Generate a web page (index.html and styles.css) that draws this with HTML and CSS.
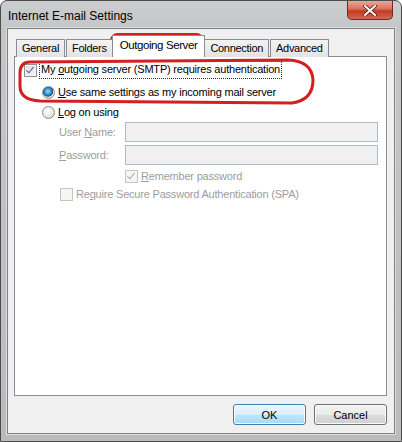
FILE: index.html
```html
<!DOCTYPE html>
<html lang="en">
  <head>
    <meta charset="UTF-8" />
    <link rel="stylesheet" href="styles.css">
    <title>Internet E-mail Settings</title>
  </head>
  <body>
    <div class="window">
      <div class="titlebar">
        <span class="title">Internet E-mail Settings</span>
        <div class="close">
          <svg width="14" height="11" viewBox="0 0 14 11">
            <path d="M2 1 L12 10 M12 1 L2 10" stroke="#5a1a12" stroke-width="3.6" stroke-linecap="round"/>
            <path d="M2 1 L12 10 M12 1 L2 10" stroke="#ffffff" stroke-width="2" stroke-linecap="round"/>
          </svg>
        </div>
      </div>

      <div class="client">
        <div class="tabs">
          <div class="tab">General</div>
          <div class="tab">Folders</div>
          <div class="tab active">Outgoing Server</div>
          <div class="tab">Connection</div>
          <div class="tab">Advanced</div>
        </div>

        <div class="panel">
          <div class="row row-auth">
            <span class="check checked"></span>
            <span class="focus">My <u>o</u>utgoing server (SMTP) requires authentication</span>
          </div>
          <div class="row row-same">
            <span class="radio on"></span>
            <span><u>U</u>se same settings as my incoming mail server</span>
          </div>
          <div class="row row-logon">
            <span class="radio"></span>
            <span><u>L</u>og on using</span>
          </div>
          <div class="row field row-user">
            <span class="label">User <u>N</u>ame:</span>
            <span class="input"></span>
          </div>
          <div class="row field row-pass">
            <span class="label"><u>P</u>assword:</span>
            <span class="input"></span>
          </div>
          <div class="row disabled row-remember">
            <span class="check checked off"></span>
            <span><u>R</u>emember password</span>
          </div>
          <div class="row disabled row-spa">
            <span class="check off"></span>
            <span>Re<u>q</u>uire Secure Password Authentication (SPA)</span>
          </div>
        </div>

        <div class="buttons">
          <button class="btn ok" type="button">OK</button>
          <button class="btn" type="button">Cancel</button>
        </div>
      </div>

      <!-- red marks drawn over the dialog -->
      <svg class="marks" width="402" height="442" viewBox="0 0 402 442">
        <rect x="111.5" y="34.5" width="91" height="21" rx="6" fill="none" stroke="#d21f1f" stroke-width="3"/>
        <path d="M30 62 L288 60 Q312 61 313 80 Q313 100 292 103 L40 101 Q20 100 20 86 L20 73 Q20 62 30 62 Z"
              fill="none" stroke="#d21f1f" stroke-width="3"/>
      </svg>
    </div>
  </body>
</html>
```

FILE: styles.css
```css
* {
  box-sizing: border-box;
}
body {
  margin: 0;
  width: 402px;
  height: 442px;
  overflow: hidden;
  font-family: "Liberation Sans", Arial, sans-serif;
  font-size: 11px;
  letter-spacing: -0.2px;
  color: #000;
}
.window {
  position: relative;
  width: 402px;
  height: 442px;
  display: flex;
  flex-direction: column;
  padding: 0 6px 7px 6px;
  border: 1px solid #4c4c4c;
  border-radius: 7px 7px 0 0;
  background: linear-gradient(to bottom, #cbcccd 0, #c4c6c8 30px, #b9bbbd 100%);
}
.titlebar {
  height: 27px;
  display: flex;
  align-items: flex-start;
  padding: 0 2px 0 1px;
}
.title {
  align-self: center;
  font-size: 12px;
  letter-spacing: 0;
  margin-top: 2px;
}
.close {
  margin-left: auto;
  width: 46px;
  height: 19px;
  display: flex;
  align-items: center;
  justify-content: center;
  border: 1px solid #6b2a22;
  border-top: none;
  border-radius: 0 0 5px 5px;
  background: linear-gradient(to bottom, #e9a99a 0, #d7705c 45%, #c23a22 55%, #d4684e 100%);
}
.client {
  flex: 1;
  display: flex;
  flex-direction: column;
  padding: 0 7px 0 6px;
  background: #f0f0f0;
  border: 1px solid #7e8084;
  box-shadow: 0 0 0 1px #dcdde0;
}

/* tabs */
.tabs {
  position: relative;
  z-index: 1;
  display: flex;
  align-items: flex-end;
  height: 23px;
  margin-top: 5px;
  margin-bottom: -1px;
  padding-left: 2px;
  letter-spacing: -0.3px;
}
.tab {
  height: 18px;
  padding: 0 5px;
  line-height: 16px;
  border: 1px solid #898c95;
  border-bottom: none;
  margin-right: 1px;
  background: linear-gradient(to bottom, #f3f3f3, #e3e3e3);
  white-space: nowrap;
}
.tab.active {
  height: 22px;
  line-height: 19px;
  padding: 0 7px;
  margin: 0 -1px 0 -2px;
  position: relative;
  z-index: 1;
  background: #fff;
  font-size: 11.5px;
  letter-spacing: -0.4px;
}

/* panel */
.panel {
  height: 340px;
  background: #fff;
  border: 1px solid #898c95;
  padding: 5px 0 0 9px;
}
.row {
  display: flex;
  align-items: center;
  height: 16px;
  gap: 3px;
  white-space: nowrap;
}
.row-same { margin: 6px 0 0 18px; }
.row-logon { margin: 4px 0 0 18px; }
.row-user { margin: 2px 0 0 35px; height: 20px; }
.row-pass { margin: 3px 0 0 35px; height: 20px; }
.row-remember { margin: 3px 0 0 101px; }
.row-spa { margin: 2px 0 0 36px; }

.field,
.disabled {
  color: #9d9d9d;
}
.label {
  width: 63px;
}
.input {
  width: 253px;
  height: 20px;
  border: 1px solid #aebccc;
  background: #f0f0f0;
}
.focus {
  outline: 1px dotted #333;
  outline-offset: 0;
  padding: 0 1px 1px 1px;
  line-height: 15px;
}

/* check boxes and radios */
.check {
  position: relative;
  width: 13px;
  height: 13px;
  flex: none;
  border: 1px solid #8e8f8f;
  background: linear-gradient(135deg, #dcdcdc, #f6f6f6);
  box-shadow: inset 0 0 0 1px #f4f4f4;
}
.check.checked::after {
  content: "";
  position: absolute;
  left: 3px;
  top: 0;
  width: 3px;
  height: 7px;
  border: solid #4a62a8;
  border-width: 0 1.5px 1.5px 0;
  transform: rotate(40deg);
}
.check.off {
  border-color: #c4c4c4;
  background: #f6f6f6;
}
.check.off.checked::after {
  border-color: #a8a8a8;
}
.radio {
  width: 13px;
  height: 13px;
  flex: none;
  border-radius: 50%;
  border: 1px solid #8d8d8d;
  background: radial-gradient(circle at 40% 35%, #ffffff 0, #e4e4e4 60%, #cfcfcf 100%);
}
.radio.on {
  background: radial-gradient(circle at 45% 40%, #9fdcf6 0, #2a8ac4 40%, #1a4f7e 55%, #e6e6e6 62%, #d0d0d0 100%);
}

/* buttons */
.buttons {
  display: flex;
  justify-content: flex-end;
  gap: 8px;
  margin-top: 8px;
}
.btn {
  width: 73px;
  height: 21px;
  padding: 0;
  font-family: inherit;
  font-size: 11px;
  letter-spacing: 0;
  color: #000;
  border: 1px solid #707070;
  border-radius: 3px;
  background: linear-gradient(to bottom, #f2f2f2 0, #ebebeb 50%, #dddddd 50%, #cfcfcf 100%);
  box-shadow: inset 0 0 0 1px #fbfbfb;
}
.btn.ok {
  border-color: #3c7fb1;
  background: linear-gradient(to bottom, #eaf6fd 0, #d9f0fc 50%, #bee6fd 50%, #a7d9f5 100%);
}

.marks {
  position: absolute;
  left: -1px;
  top: -1px;
  pointer-events: none;
}
```
